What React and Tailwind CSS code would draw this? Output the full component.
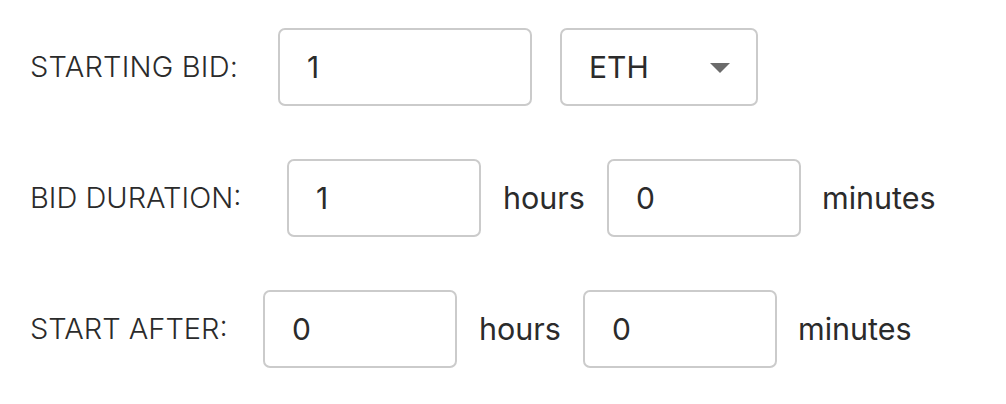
import { useState } from 'react';

const font = { fontFamily: 'Inter, "Noto Sans", sans-serif' };

const TimeRow = ({ label, labelWidth, hours, minutes, setHours, setMinutes }) => (
  <div className="flex items-center h-[78px]">
    <label className={`${labelWidth} shrink-0 text-[29px] font-light text-[#2b2b2b] whitespace-nowrap`}>{label}</label>
    <input
      value={hours}
      onChange={(e) => setHours(e.target.value)}
      className="w-[194px] h-[78px] px-[27px] text-[30px] text-[#2b2b2b] border-2 border-[#cbcbcb] rounded-[7px] outline-none"
    />
    <span className="text-[30.5px] text-[#2b2b2b] mx-[22px]">hours</span>
    <input
      value={minutes}
      onChange={(e) => setMinutes(e.target.value)}
      className="w-[194px] h-[78px] px-[27px] text-[30px] text-[#2b2b2b] border-2 border-[#cbcbcb] rounded-[7px] outline-none"
    />
    <span className="text-[30.5px] text-[#2b2b2b] ml-[21px]">minutes</span>
  </div>
);

const App = () => {
  const [bid, setBid] = useState('1');
  const [currency, setCurrency] = useState('ETH');
  const [durH, setDurH] = useState('1');
  const [durM, setDurM] = useState('0');
  const [afterH, setAfterH] = useState('0');
  const [afterM, setAfterM] = useState('0');

  return (
    <div className="bg-white w-[1006px] h-[404px] pl-[30px] pt-[28px] flex flex-col gap-[53px]" style={font}>
      <div className="flex items-center h-[78px]">
        <label className="w-[248px] shrink-0 text-[29px] font-light text-[#2b2b2b] tracking-[0.2px] whitespace-nowrap">STARTING BID:</label>
        <input
          value={bid}
          onChange={(e) => setBid(e.target.value)}
          className="w-[254px] h-[78px] px-[27px] text-[30px] text-[#2b2b2b] border-2 border-[#cbcbcb] rounded-[7px] outline-none"
        />
        <div className="relative ml-[28px] w-[198px] h-[78px]">
          <select
            value={currency}
            onChange={(e) => setCurrency(e.target.value)}
            className="appearance-none w-full h-full pl-[27px] text-[30px] text-[#2b2b2b] bg-white border-2 border-[#cbcbcb] rounded-[7px] outline-none"
          >
            <option value="ETH">ETH</option>
            <option value="DAI">DAI</option>
          </select>
          <svg className="absolute right-[28px] top-[35px] pointer-events-none" width="20" height="10" viewBox="0 0 20 10">
            <path d="M0 0 L20 0 L10 10 Z" fill="#6b6b6b" />
          </svg>
        </div>
      </div>
      <TimeRow label="BID DURATION:" labelWidth="w-[257px]" hours={durH} minutes={durM} setHours={setDurH} setMinutes={setDurM} />
      <TimeRow label="START AFTER:" labelWidth="w-[233px]" hours={afterH} minutes={afterM} setHours={setAfterH} setMinutes={setAfterM} />
    </div>
  );
};

export default App;
